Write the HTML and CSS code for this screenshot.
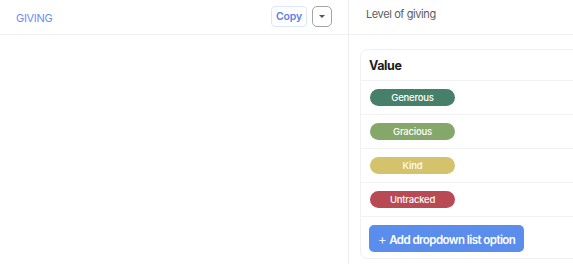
FILE: index.html
```html
<!DOCTYPE html>
<html lang="en">
<head>
    <meta charset="UTF-8">
    <title>Giving</title>
    <link rel="stylesheet" href="styles.css">
</head>
<body>
    <div class="layout">
        <div class="left-pane">
            <div class="pane-header">
                <span class="field-name">GIVING</span>
                <div class="header-actions">
                    <button class="copy-btn">Copy</button>
                    <button class="menu-btn">
                        <svg width="6" height="3" viewBox="0 0 6 3"><path d="M0 0h6L3 3z" fill="#555"/></svg>
                    </button>
                </div>
            </div>
        </div>
        <div class="right-pane">
            <div class="pane-header">
                <span class="field-label">Level of giving</span>
            </div>
            <div class="options-card">
                <div class="card-title">Value</div>
                <div class="option-row"><span class="pill generous">Generous</span></div>
                <div class="option-row"><span class="pill gracious">Gracious</span></div>
                <div class="option-row"><span class="pill kind">Kind</span></div>
                <div class="option-row"><span class="pill untracked">Untracked</span></div>
                <div class="add-row">
                    <button class="add-btn"><span class="plus">+</span> Add dropdown list option</button>
                </div>
            </div>
        </div>
    </div>
</body>
</html>
```

FILE: styles.css
```css
body {
    font-family: Inter, 'Noto Sans', sans-serif;
    background-color: white;
    margin: 0;
    padding: 0;
    overflow: hidden;
}

.layout {
    display: flex;
    height: 264px;
}

.left-pane {
    width: 348px;
    border-right: 1px solid #ececec;
}

.right-pane {
    flex: 1;
    min-width: 0;
}

.pane-header {
    height: 35px;
    border-bottom: 1px solid #f0f0f0;
    display: flex;
    align-items: center;
    justify-content: space-between;
    box-sizing: border-box;
}

.left-pane .pane-header {
    padding: 0 16px 0 16px;
}

.field-name {
    color: #6d8ef3;
    font-size: 11px;
    letter-spacing: -0.3px;
    padding-top: 1px;
}

.header-actions {
    display: flex;
    align-items: center;
    gap: 5px;
    margin-top: -1px;
}

.copy-btn {
    font-family: inherit;
    width: 36px;
    height: 21px;
    padding: 0;
    background: white;
    border: 1px solid #dbe5fb;
    border-radius: 4px;
    color: #5a82ea;
    font-size: 10.5px;
    font-weight: 600;
    letter-spacing: -0.2px;
}

.menu-btn {
    width: 20px;
    height: 21px;
    padding: 0;
    background: white;
    border: 1px solid #a4a4a4;
    border-radius: 5px;
    display: flex;
    align-items: center;
    justify-content: center;
}

.right-pane .pane-header {
    padding-left: 17px;
    align-items: flex-start;
    padding-top: 7px;
}

.field-label {
    color: #5c5c5c;
    font-size: 11px;
    letter-spacing: -0.4px;
}

.options-card {
    margin: 14px -20px 0 11px;
    border: 1px solid #f0f0f0;
    border-radius: 7px;
    height: 210px;
    box-sizing: border-box;
}

.card-title {
    height: 30px;
    padding: 0 8px;
    display: flex;
    align-items: center;
    font-size: 12.5px;
    font-weight: 700;
    letter-spacing: -0.4px;
    color: #1d1d1d;
    border-bottom: 1px solid #f2f2f2;
}

.option-row {
    height: 34px;
    padding: 0 9px;
    display: flex;
    align-items: center;
    border-bottom: 1px solid #f2f2f2;
    box-sizing: border-box;
}

.pill {
    width: 85px;
    height: 17px;
    border-radius: 9px;
    color: white;
    font-size: 9.5px;
    font-weight: 500;
    letter-spacing: -0.2px;
    display: flex;
    align-items: center;
    justify-content: center;
}

.generous { background-color: #47806a; }
.gracious { background-color: #86a76a; }
.kind { background-color: #d4c26c; }
.untracked { background-color: #b84a53; }

.add-row {
    padding: 8px 8px;
}

.add-btn {
    font-family: inherit;
    width: 155px;
    height: 27px;
    padding: 0;
    background-color: #5b8ded;
    color: white;
    border: none;
    border-radius: 5px;
    font-size: 11.5px;
    font-weight: 600;
    letter-spacing: -0.55px;
}

.plus {
    font-weight: 300;
    font-size: 14px;
    letter-spacing: 0;
}
```
